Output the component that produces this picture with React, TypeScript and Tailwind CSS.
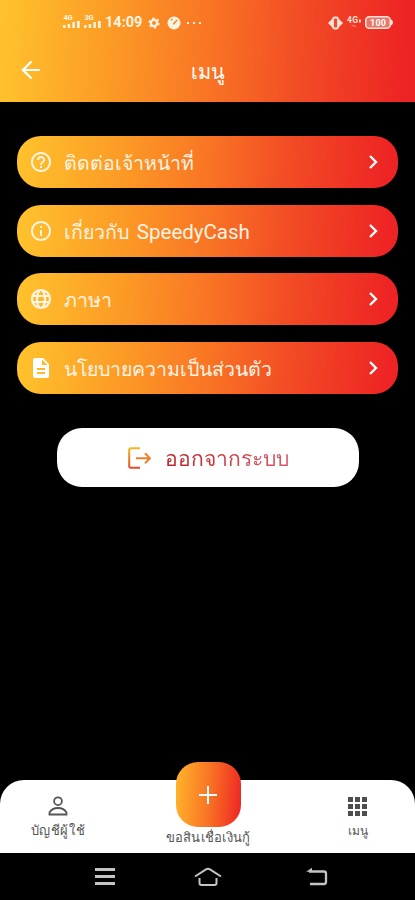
import type { ReactNode } from "react";
import { MdDescription, MdHelpOutline, MdInfoOutline } from "react-icons/md";

const font = "font-['Roboto',sans-serif]";

function Signal({ label }: { label: string }) {
  return (
    <svg width="17" height="15" viewBox="0 0 17 15" fill="#fff4df" className="shrink-0">
      <text x="0.5" y="6" fontSize="7.5" fontWeight="700" fontFamily="Roboto, sans-serif" textLength="9">{label}</text>
      <path d="M0 11h2.500v3H0zM4.700 10h2.500v4H4.700zM9.400 8h2.500v6H9.400zM14 7h2.700v7H14z" />
    </svg>
  );
}

function StatusBar() {
  return (
    <div className="flex h-[45px] items-center pl-[63px] pr-[22px] text-[#fff4df]">
      <div className="-mt-[2px] flex gap-[4px]">
        <Signal label="4G" />
        <Signal label="3G" />
      </div>
      <span className="ml-[4px] w-[39px] whitespace-nowrap pt-[2px] text-[14.500px] font-bold leading-none">14:09</span>
      <svg width="12" height="12" viewBox="0 0 12 12" className="ml-[4px]" fill="none" stroke="#fff4df">
        <circle cx="6" cy="6" r="3.100" strokeWidth="2.200" />
        <circle cx="6" cy="6" r="4.800" strokeWidth="1.500" strokeDasharray="2.500 2.530" />
      </svg>
      <svg width="14" height="14" viewBox="0 0 14 14" className="ml-[7px]">
        <circle cx="7" cy="7" r="6.500" fill="#fff4df" />
        <path d="M4 4.200 5.500 3M6.500 8 10 4M6 7.800h1.500" fill="none" stroke="#f98428" strokeWidth="1.500" />
      </svg>
      <svg width="14" height="4" viewBox="0 0 14 4" className="ml-[6px]" fill="#fff4df">
        <path d="M0 1h2v2H0zM6 1h2v2H6zM12 1h2v2h-2z" />
      </svg>
      <svg width="15" height="14" viewBox="0 0 15 14" className="ml-auto" fill="#ffe2d8">
        <path d="M6 1v12L0 7zM9 1v12l6-6z" />
        <rect x="5" y="1.500" width="5" height="11" rx="1.800" fill="#ee4e30" stroke="#ffe2d8" strokeWidth="1.800" />
      </svg>
      <svg width="14" height="13" viewBox="0 0 14 13" className="ml-[4px]" fill="#ffe2d8">
        <text x="0" y="6.5" fontSize="8.500" fontWeight="700" fontFamily="Roboto, sans-serif" textLength="11">4G</text>
        <path d="M12 3.500h1.800v3H12z" />
        <path d="m4 8.500 2 2.500h4L8 9z" fillOpacity=".3" />
      </svg>
      <svg width="28" height="13" viewBox="0 0 28 13" className="ml-[4px]">
        <rect x=".7" y=".7" width="24.600" height="11.600" rx="3.500" fill="#e8776a" stroke="#ffe2d8" strokeWidth="1.500" />
        <path d="M26 3.500c2.600 1 2.600 5 0 6z" fill="#ffe2d8" />
        <text x="5" y="9.800" fontSize="9" fontWeight="700" fill="#fff" fontFamily="Roboto, sans-serif" textLength="16">100</text>
      </svg>
    </div>
  );
}

function Header() {
  return (
    <header className="h-[102px] bg-linear-[92deg,#ffc32c_0%,#fc9a26_27%,#f97524_50%,#f24c25_72%,#ee2424_97%]">
      <StatusBar />
      <div className="grid h-[50px] grid-cols-[1fr_auto_1fr] items-center text-white">
        <svg width="20" height="20" viewBox="0 0 20 20" className="ml-[21px]" fill="none" stroke="#fff" strokeWidth="2.200" strokeLinecap="round">
          <path d="M10 2 1.800 10 10 18M2 10h16" />
        </svg>
        <h1 className="whitespace-nowrap pt-[3px] text-[20px] leading-[30px]">เมนู</h1>
      </div>
    </header>
  );
}

function GlobeIcon() {
  return (
    <svg width="24" height="24" viewBox="0 0 24 24" fill="none" stroke="currentColor" strokeWidth="2.200">
      <circle cx="12" cy="12" r="9" />
      <ellipse cx="12" cy="12" rx="4" ry="9" />
      <path d="M4 9h16M4 15h16" />
    </svg>
  );
}

function MenuRow({ icon, children }: { icon: ReactNode; children: ReactNode }) {
  return (
    <button className="flex h-[52px] w-full items-center rounded-[24px] bg-linear-[94deg,#ffc32c_0%,#fc9a26_28%,#f97524_50%,#f24c25_71%,#ee2424_97%] pl-[12px] pr-[20.500px] text-[#fff3e2]">
      {icon}
      <span className="ml-[11px] whitespace-nowrap pt-[4px] text-[19.500px] leading-[30px]">{children}</span>
      <svg width="9" height="14" viewBox="0 0 9 14" className="ml-auto" fill="none" stroke="#fff" strokeWidth="2.400">
        <path d="m1 1 6 6-6 6" />
      </svg>
    </button>
  );
}

function LogoutButton() {
  return (
    <button className="mx-auto mt-[34px] flex h-[59px] w-[302px] items-center rounded-[25px] bg-white pl-[71px]">
      <svg width="23" height="22" viewBox="0 0 23 22" fill="none" strokeWidth="2">
        <defs>
          <linearGradient id="exit" x1="0" y1="0" x2="0" y2="22" gradientUnits="userSpaceOnUse">
            <stop stopColor="#f7bd1e" />
            <stop offset="1" stopColor="#e8422d" />
          </linearGradient>
        </defs>
        <path d="M12 1.200H3Q1.200 1.200 1.200 3v16q0 1.800 1.800 1.800h9" stroke="url(#exit)" />
        <path d="M8 11.300h14M17 6.300l5 5-5 5" stroke="#ed812d" />
      </svg>
      <span className="ml-[14px] whitespace-nowrap bg-linear-to-r from-[#bd2028] to-[#d75a68] bg-clip-text pt-[2px] text-[21.100px] leading-[30px] text-transparent">ออกจากระบบ</span>
    </button>
  );
}

function BottomNav() {
  return (
    <nav className="grid h-[73px] grid-cols-[116px_184px_115px] rounded-t-[24px] bg-white text-[13px] text-[#555]">
      <div className="flex flex-col items-center pt-[16px]">
        <svg width="20" height="20" viewBox="0 0 20 20" fill="none" stroke="#555" strokeWidth="1.800">
          <circle cx="10" cy="5.200" r="3.900" />
          <path d="M1.500 18.500v-2Q4 12 10 12t8.500 4.500v2z" />
        </svg>
        <span className="mt-[6px] whitespace-nowrap leading-[18px] tracking-[0.6px]">บัญชีผู้ใช้</span>
      </div>
      <div className="-mt-[18px] flex flex-col items-center">
        <div className="flex h-[65px] w-[65px] shrink-0 items-center justify-center rounded-[22px] bg-linear-[94deg,#ffb52a,#f97524_50%,#ee2424]">
          <svg width="20" height="20" viewBox="0 0 20 20" stroke="#fff" strokeWidth="2">
            <path d="M10 1v18M1 10h18" />
          </svg>
        </div>
        <span className="mt-[2px] whitespace-nowrap leading-[18px] tracking-[0.250px]">ขอสินเชื่อเงินกู้</span>
      </div>
      <div className="flex flex-col items-center pt-[17px]">
        <svg width="19" height="19" viewBox="0 0 19 19" fill="#4e4e4e">
          <path d="M0 0h5v5H0zM7 0h5v5H7zM14 0h5v5h-5zM0 7h5v5H0zM7 7h5v5H7zM14 7h5v5h-5zM0 14h5v5H0zM7 14h5v5H7zM14 14h5v5h-5z" />
        </svg>
        <span className="mt-[6px] whitespace-nowrap text-[12px] leading-[18px]">เมนู</span>
      </div>
    </nav>
  );
}

function SystemNav() {
  return (
    <div className="flex h-[47px] items-center bg-black pl-[95px]">
      <svg width="20" height="17" viewBox="0 0 20 17" fill="#c4c4c4">
        <path d="M0 0h20v3H0zM0 7h20v3H0zM0 14h20v3H0z" />
      </svg>
      <svg width="28" height="20" viewBox="0 0 28 20" className="ml-[79px]" fill="none" stroke="#c4c4c4" strokeWidth="2">
        <path d="M1 9.500 12 2.300q2-1.200 4 0L27 9.500M5.500 11v5q0 2 2 2h13q2 0 2-2v-5" />
      </svg>
      <svg width="22" height="19" viewBox="0 0 22 19" className="ml-[84px]" fill="none" stroke="#c4c4c4" strokeWidth="2.300">
        <path d="M3 4.500h15q2 0 2 2V15q0 2-2 2H4" />
        <path d="m0 4.800 6-4v4z" fill="#c4c4c4" stroke="none" />
      </svg>
    </div>
  );
}

export default function App() {
  return (
    <div className={`flex h-[900px] w-[415px] flex-col overflow-hidden bg-black ${font}`}>
      <Header />
      <main className="flex-1 px-[17px] pt-[34px]">
        <div className="flex flex-col gap-[16.700px]">
          <MenuRow icon={<MdHelpOutline size={24} />}>ติดต่อเจ้าหน้าที่</MenuRow>
          <MenuRow icon={<MdInfoOutline size={24} />}>
            เกี่ยวกับ <span className="ml-[3px] text-[20.500px]">SpeedyCash</span>
          </MenuRow>
          <MenuRow icon={<GlobeIcon />}>ภาษา</MenuRow>
          <MenuRow icon={<MdDescription size={24} className="text-white" />}>นโยบายความเป็นส่วนตัว</MenuRow>
        </div>
        <LogoutButton />
      </main>
      <BottomNav />
      <SystemNav />
    </div>
  );
}
